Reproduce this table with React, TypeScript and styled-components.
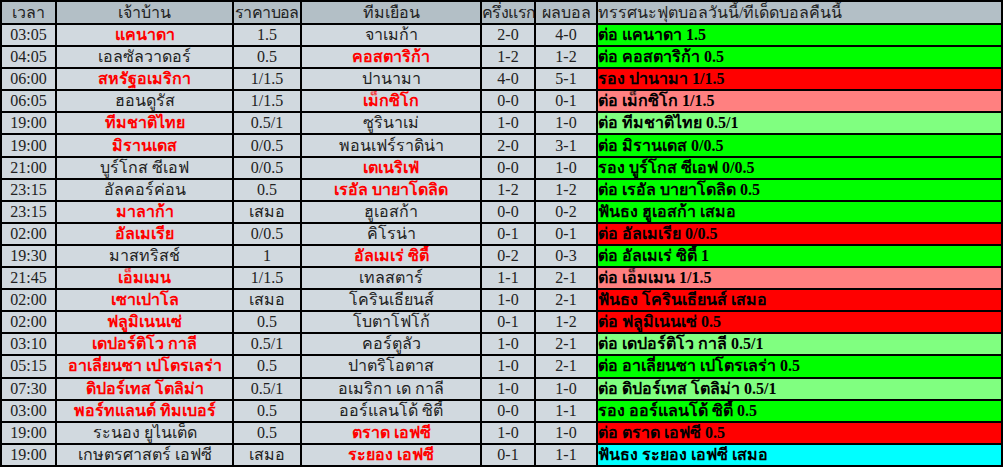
import React from 'react';
import styled, { createGlobalStyle } from 'styled-components';

const GlobalStyle = createGlobalStyle`
  html, body {
    margin: 0;
    padding: 0;
    background: #ffffff;
  }
`;

type Tone = 'green' | 'red' | 'pink' | 'lime' | 'cyan';

type Match = {
  time: string;
  home: string;
  homeFav?: boolean;
  odds: string;
  away: string;
  awayFav?: boolean;
  half: string;
  score: string;
  tip: string;
  tone: Tone;
};

const matches: Match[] = [
  { time: '03:05', home: 'แคนาดา', homeFav: true, odds: '1.5', away: 'จาเมก้า', half: '2-0', score: '4-0', tip: 'ต่อ แคนาดา 1.5', tone: 'green' },
  { time: '04:05', home: 'เอลซัลวาดอร์', odds: '0.5', away: 'คอสตาริก้า', awayFav: true, half: '1-2', score: '1-2', tip: 'ต่อ คอสตาริก้า 0.5', tone: 'green' },
  { time: '06:00', home: 'สหรัฐอเมริกา', homeFav: true, odds: '1/1.5', away: 'ปานามา', half: '4-0', score: '5-1', tip: 'รอง ปานามา 1/1.5', tone: 'red' },
  { time: '06:05', home: 'ฮอนดูรัส', odds: '1/1.5', away: 'เม็กซิโก', awayFav: true, half: '0-0', score: '0-1', tip: 'ต่อ เม็กซิโก 1/1.5', tone: 'pink' },
  { time: '19:00', home: 'ทีมชาติไทย', homeFav: true, odds: '0.5/1', away: 'ซูรินาเม่', half: '1-0', score: '1-0', tip: 'ต่อ ทีมชาติไทย 0.5/1', tone: 'lime' },
  { time: '19:00', home: 'มิรานเดส', homeFav: true, odds: '0/0.5', away: 'พอนเฟร์ราดิน่า', half: '2-0', score: '3-1', tip: 'ต่อ มิรานเดส 0/0.5', tone: 'green' },
  { time: '21:00', home: 'บูร์โกส ซีเอฟ', odds: '0/0.5', away: 'เตเนริเฟ่', awayFav: true, half: '0-0', score: '1-0', tip: 'รอง บูร์โกส ซีเอฟ 0/0.5', tone: 'green' },
  { time: '23:15', home: 'อัลคอร์ค่อน', odds: '0.5', away: 'เรอัล บายาโดลิด', awayFav: true, half: '1-2', score: '1-2', tip: 'ต่อ เรอัล บายาโดลิด 0.5', tone: 'green' },
  { time: '23:15', home: 'มาลาก้า', homeFav: true, odds: 'เสมอ', away: 'ฮูเอสก้า', half: '0-0', score: '0-2', tip: 'ฟันธง ฮูเอสก้า เสมอ', tone: 'green' },
  { time: '02:00', home: 'อัลเมเรีย', homeFav: true, odds: '0/0.5', away: 'คิโรน่า', half: '0-1', score: '0-1', tip: 'ต่อ อัลเมเรีย 0/0.5', tone: 'red' },
  { time: '19:30', home: 'มาสทริสช์', odds: '1', away: 'อัลเมเร่ ซิตี้', awayFav: true, half: '0-2', score: '0-3', tip: 'ต่อ อัลเมเร่ ซิตี้ 1', tone: 'green' },
  { time: '21:45', home: 'เอ็มเมน', homeFav: true, odds: '1/1.5', away: 'เทลสตาร์', half: '1-1', score: '2-1', tip: 'ต่อ เอ็มเมน 1/1.5', tone: 'pink' },
  { time: '02:00', home: 'เซาเปาโล', homeFav: true, odds: 'เสมอ', away: 'โครินเธียนส์', half: '1-0', score: '2-1', tip: 'ฟันธง โครินเธียนส์ เสมอ', tone: 'red' },
  { time: '02:00', home: 'ฟลูมิเนนเซ่', homeFav: true, odds: '0.5', away: 'โบตาโฟโก้', half: '0-1', score: '1-2', tip: 'ต่อ ฟลูมิเนนเซ่ 0.5', tone: 'red' },
  { time: '03:10', home: 'เดปอร์ติโว กาลี', homeFav: true, odds: '0.5/1', away: 'คอร์ตูลัว', half: '1-0', score: '2-1', tip: 'ต่อ เดปอร์ติโว กาลี 0.5/1', tone: 'lime' },
  { time: '05:15', home: 'อาเลี่ยนซา เปโตรเลร่า', homeFav: true, odds: '0.5', away: 'ปาตริโอตาส', half: '1-0', score: '2-1', tip: 'ต่อ อาเลี่ยนซา เปโตรเลร่า 0.5', tone: 'green' },
  { time: '07:30', home: 'ดิปอร์เทส โตลิม่า', homeFav: true, odds: '0.5/1', away: 'อเมริกา เด กาลี', half: '1-0', score: '1-0', tip: 'ต่อ ดิปอร์เทส โตลิม่า 0.5/1', tone: 'lime' },
  { time: '03:00', home: 'พอร์ทแลนด์ ทิมเบอร์', homeFav: true, odds: '0.5', away: 'ออร์แลนโด้ ซิตี้', half: '0-0', score: '1-1', tip: 'รอง ออร์แลนโด้ ซิตี้ 0.5', tone: 'green' },
  { time: '19:00', home: 'ระนอง ยูไนเต็ด', odds: '0.5', away: 'ตราด เอฟซี', awayFav: true, half: '1-0', score: '1-0', tip: 'ต่อ ตราด เอฟซี 0.5', tone: 'red' },
  { time: '19:00', home: 'เกษตรศาสตร์ เอฟซี', odds: 'เสมอ', away: 'ระยอง เอฟซี', awayFav: true, half: '0-1', score: '1-1', tip: 'ฟันธง ระยอง เอฟซี เสมอ', tone: 'cyan' },
];

const toneColors: Record<Tone, string> = {
  green: '#00ff00',
  red: '#ff0000',
  pink: '#ff8080',
  lime: '#80ff80',
  cyan: '#00ffff',
};

const Table = styled.table`
  border-collapse: collapse;
  table-layout: fixed;
  width: 1003px;
  font-family: "Liberation Serif", "Times New Roman", "Noto Sans", serif;
  font-size: 16px;
  color: #222222;
`;

const Col = styled.col<{ $w: number }>`
  width: ${(p) => p.$w}px;
`;

const Row = styled.tr<{ $h: number }>`
  height: ${(p) => p.$h}px;
`;

const HeadCell = styled.th<{ $left?: boolean; $tight?: boolean }>`
  border: 2px solid #000000;
  background: #b3bfc6;
  font-weight: normal;
  text-align: ${(p) => (p.$left ? 'left' : 'center')};
  letter-spacing: ${(p) => (p.$tight ? '-0.6px' : 'normal')};
  padding: 0;
  white-space: nowrap;
  overflow: hidden;
  line-height: 18px;
`;

const Cell = styled.td<{ $fav?: boolean }>`
  border: 2px solid #000000;
  background: #d1d9df;
  text-align: center;
  padding: 0;
  white-space: nowrap;
  overflow: hidden;
  line-height: 18px;
  color: ${(p) => (p.$fav ? '#ff0000' : '#222222')};
  font-weight: ${(p) => (p.$fav ? 'bold' : 'normal')};
`;

const TipCell = styled.td<{ $tone: Tone }>`
  border: 2px solid #000000;
  background: ${(p) => toneColors[p.$tone]};
  color: #000000;
  font-weight: bold;
  text-align: left;
  padding: 0;
  white-space: nowrap;
  overflow: hidden;
  line-height: 18px;
`;

const widths = [55, 177, 68, 180, 54, 62, 405];

export default function App() {
  return (
    <>
      <GlobalStyle />
      <Table>
        <colgroup>
          {widths.map((w, i) => (
            <Col key={i} $w={w} />
          ))}
        </colgroup>
        <thead>
          <Row $h={23}>
            <HeadCell>เวลา</HeadCell>
            <HeadCell>เจ้าบ้าน</HeadCell>
            <HeadCell $tight>ราคาบอล</HeadCell>
            <HeadCell>ทีมเยือน</HeadCell>
            <HeadCell $tight>ครึ่งแรก</HeadCell>
            <HeadCell>ผลบอล</HeadCell>
            <HeadCell $left>ทรรศนะฟุตบอลวันนี้/ทีเด็ดบอลคืนนี้</HeadCell>
          </Row>
        </thead>
        <tbody>
          {matches.map((m, i) => (
            <Row key={i} $h={22.1}>
              <Cell>{m.time}</Cell>
              <Cell $fav={m.homeFav}>{m.home}</Cell>
              <Cell>{m.odds}</Cell>
              <Cell $fav={m.awayFav}>{m.away}</Cell>
              <Cell>{m.half}</Cell>
              <Cell>{m.score}</Cell>
              <TipCell $tone={m.tone}>{m.tip}</TipCell>
            </Row>
          ))}
        </tbody>
      </Table>
    </>
  );
}
